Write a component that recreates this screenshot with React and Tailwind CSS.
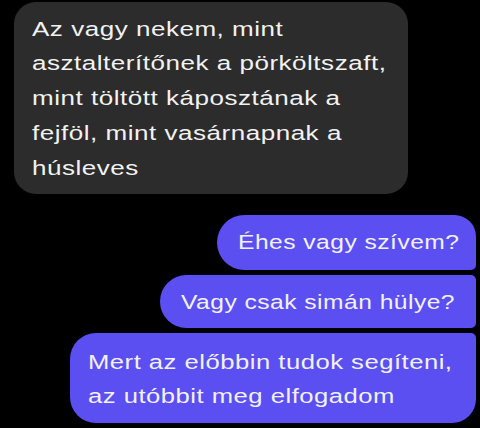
export default function App() {
  const font = { fontFamily: "'Liberation Sans', Arial, sans-serif" };
  const line = "origin-left tracking-[0.4px] whitespace-nowrap";

  return (
    <div className="w-[480px] h-[428px] bg-black overflow-hidden text-[#f2f2f2] text-[20.5px]" style={font}>
      <div className="pt-[2px] pl-[14px]">
        <div className="w-[394px] h-[192px] rounded-[22px] bg-[#2c2c2c] pl-[18px] pt-[9.5px] leading-[34.75px]">
          <div className={`${line} scale-x-[1.27]`}>
            Az vagy nekem, mint
            <br />
            asztalterítőnek a pörköltszaft,
            <br />
            mint töltött káposztának a
            <br />
            fejföl, mint vasárnapnak a
            <br />
            húsleves
          </div>
        </div>
      </div>

      <div className="mt-[21px] flex flex-col items-end gap-[5px] pr-[4px] leading-[34.75px]">
        <div className="w-[259px] h-[55px] rounded-l-[28px] rounded-tr-[22px] rounded-br-[5px] bg-[#5b4ff2] pl-[21px] pt-[9.5px]">
          <div className={`${line} scale-x-[1.2]`}>Éhes vagy szívem?</div>
        </div>
        <div className="w-[316px] h-[53px] rounded-l-[27px] rounded-r-[5px] bg-[#5b4ff2] pl-[21px] pt-[10px]">
          <div className={`${line} scale-x-[1.2]`}>Vagy csak simán hülye?</div>
        </div>
        <div className="w-[406px] h-[90px] rounded-l-[26px] rounded-tr-[5px] rounded-br-[24px] bg-[#5b4ff2] pl-[18px] pt-[12px] leading-[33.5px]">
          <div className={`${line} scale-x-[1.25]`}>
            Mert az előbbin tudok segíteni,
            <br />
            az utóbbit meg elfogadom
          </div>
        </div>
      </div>
    </div>
  );
}
